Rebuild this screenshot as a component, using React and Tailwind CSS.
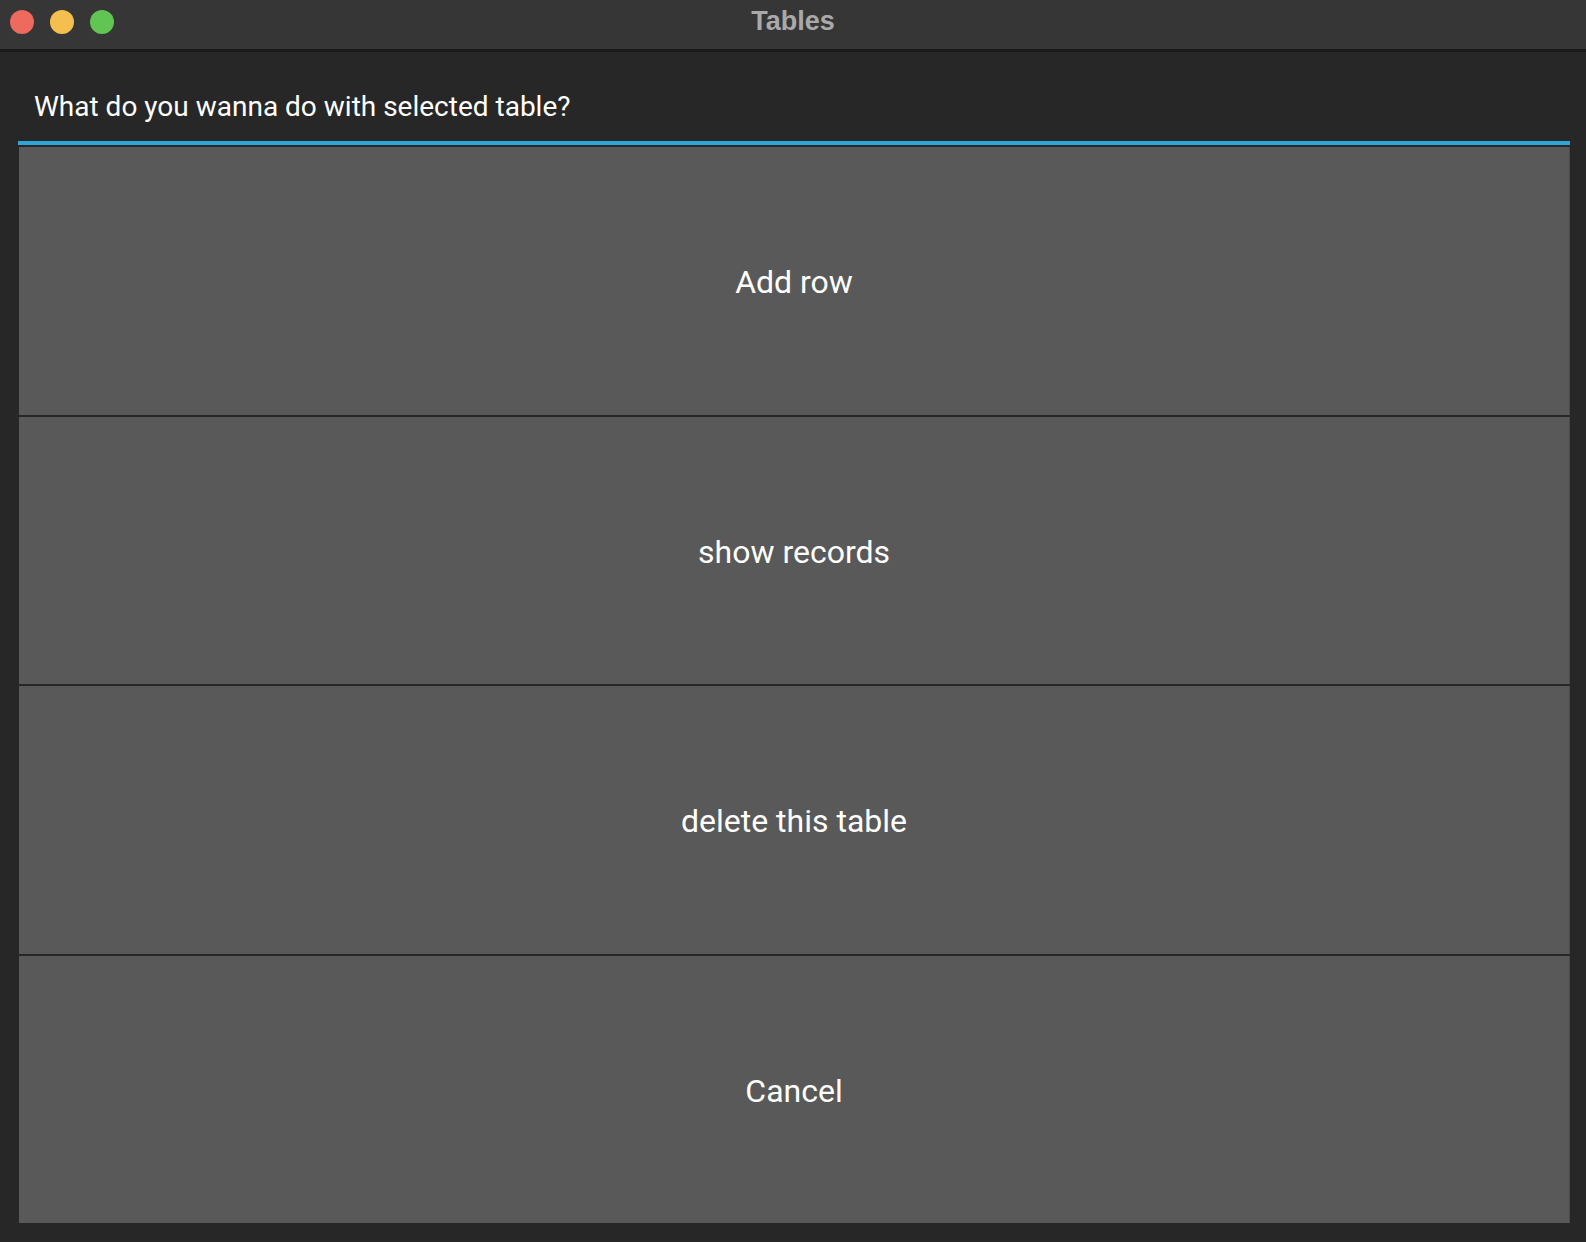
export default function App() {
  const actions = ["Add row", "show records", "delete this table", "Cancel"];
  return (
    <div className="h-[1242px] w-[1586px] flex flex-col bg-[#272727] overflow-hidden" style={{ fontFamily: "Roboto, 'Noto Sans', sans-serif" }}>
      {/* title bar */}
      <div className="relative h-[49px] shrink-0 bg-[#363636] flex items-center">
        <div className="flex gap-4 pl-[10px] pb-[5px]">
          <span className="w-6 h-6 rounded-full bg-[#ee6a5f]" />
          <span className="w-6 h-6 rounded-full bg-[#f5bf4f]" />
          <span className="w-6 h-6 rounded-full bg-[#61c554]" />
        </div>
        <div className="absolute inset-0 flex items-center justify-center pb-[7px]">
          <span className="text-[27px] font-bold text-[#a9a9a9] leading-none" style={{ fontFamily: "'Liberation Sans', Arial, sans-serif" }}>Tables</span>
        </div>
      </div>
      <div className="h-[3px] shrink-0 bg-[#1a1a1a]" />

      <div className="flex-1 flex flex-col pl-[18px] pr-[16px] pb-[19px]">
        <div className="h-[89px] shrink-0 flex items-end pl-[16px] pb-[20px]">
          <span className="text-[28px] text-white leading-none">What do you wanna do with selected table?</span>
        </div>
        <div className="h-[4px] shrink-0 bg-[#2ea6d9]" />
        <div className="flex-1 flex flex-col gap-[2px] pt-[2px] pl-px">
          {actions.map((a) => (
            <button
              key={a}
              className="flex-1 bg-[#595959] border-r border-[#4a4a4a] flex items-center justify-center pt-[3px] text-[32px] text-white"
            >
              {a}
            </button>
          ))}
        </div>
      </div>
    </div>
  );
}
